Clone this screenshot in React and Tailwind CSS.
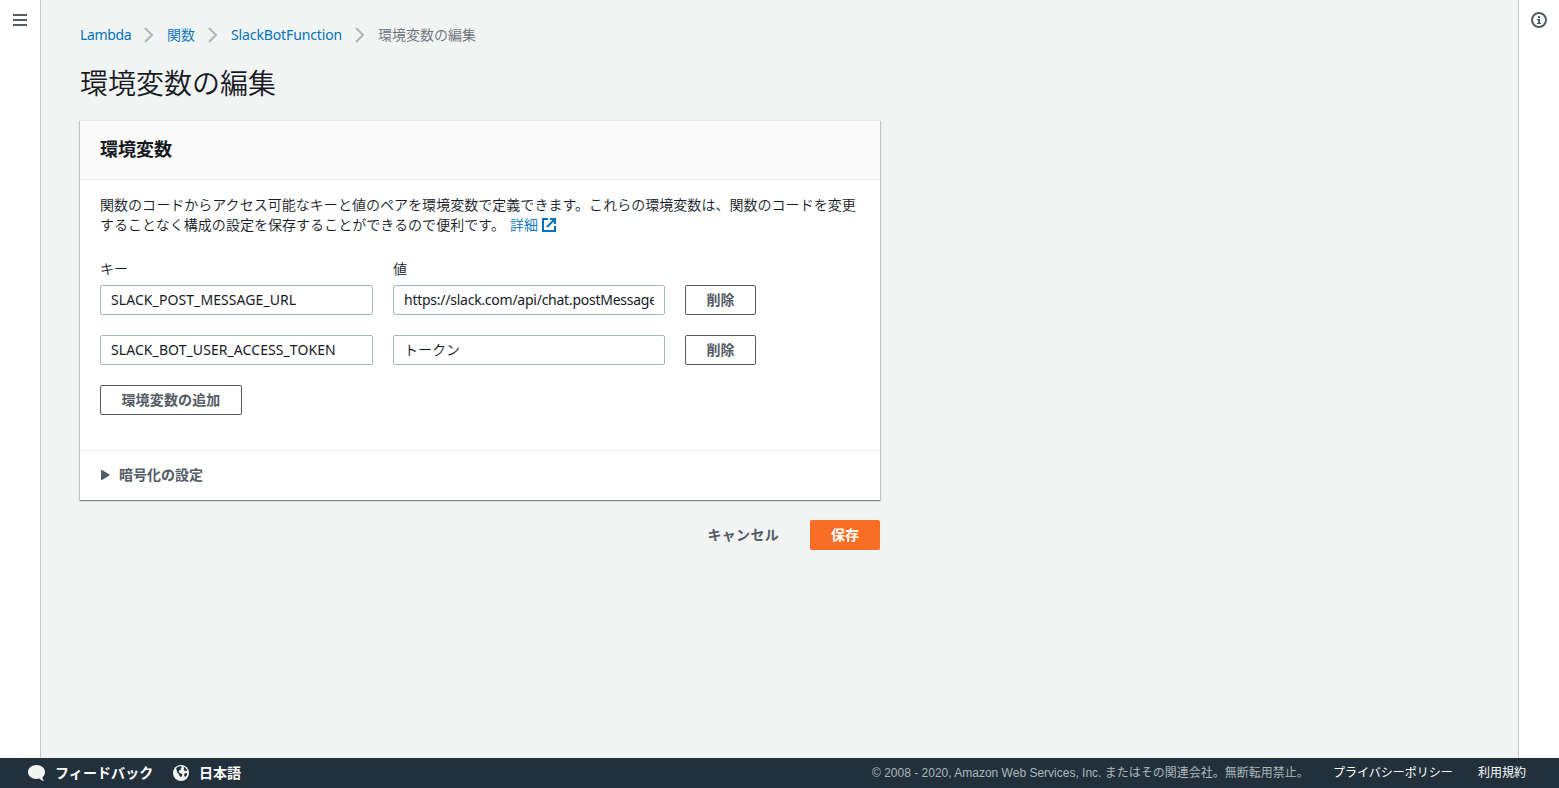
import React, { Fragment, useState } from "react";

const initialVariables = [
    { key: "SLACK_POST_MESSAGE_URL", value: "https://slack.com/api/chat.postMessage", keyStyle: "tracking-[0.08px]", valueStyle: "tracking-[-0.25px]" },
    { key: "SLACK_BOT_USER_ACCESS_TOKEN", value: "トークン", keyStyle: "tracking-[0.08px]", valueStyle: "font-[350]" },
];

function MenuIcon() {
    return (
        <svg width="14" height="12" viewBox="0 0 14 12" fill="#545b64">
            <path d="M0 0h14v2H0zM0 5h14v2H0zM0 10h14v2H0z" />
        </svg>
    );
}

function InfoIcon() {
    return (
        <svg width="16" height="16" viewBox="0 0 16 16" fill="none">
            <circle cx="8" cy="8" r="7" stroke="#545b64" strokeWidth="2" />
            <path d="M7 4h2v2H7zM6 7h3v4h1v1H6v-1h1V8H6z" fill="#545b64" />
        </svg>
    );
}

function ExternalIcon() {
    return (
        <svg className="ml-1 inline-block align-[-2px]" width="14" height="14" viewBox="0 0 14 14" fill="none" stroke="#0073bb" strokeWidth="2">
            <path d="M6 1H1v12h12V8M8 1h5v5M13 1L5 9" />
        </svg>
    );
}

function Chevron() {
    return (
        <svg width="10" height="16" viewBox="0 0 10 16" fill="none" stroke="#aab7b8" strokeWidth="2">
            <path d="M1 1l7 7-7 7" />
        </svg>
    );
}

function SpeechIcon() {
    return (
        <svg width="18" height="17" viewBox="0 0 18 17" fill="#f2f3f3">
            <path d="M8.500 0C3.800 0 0 3 0 6.900c0 3.900 3.800 7 8.500 7 1 0 2-.1 2.900-.4 1.200 1.500 2.800 2.400 4.600 2.500-1-1-1.500-2.400-1.500-3.900 1.600-1.300 2.500-3.100 2.500-5.200C17 3 13.200 0 8.500 0z" />
        </svg>
    );
}

function GlobeIcon() {
    return (
        <svg width="16" height="16" viewBox="0 0 16 16">
            <circle cx="8" cy="8" r="8" fill="#f2f3f3" />
            <path d="M3.200 3.200C4.600 1.700 6.200 1.200 8 1.300l1 1-1.400 1 .5 1.300-1.900 1-.6 1.500 1.300 1 1.500.3 1 1.400-.7 1.700-1.200.6-1.200-1.600-.3-1.500-1.600-1.200-.7-2.300zM10.500 1.800c1.800.7 3 1.900 3.700 3.600l-1.100.6-1.500-.3-1-1.300.6-1zM11.500 8.500l1.700-.6 1 .8c-.3 1.400-1 2.500-2.100 3.400l-1-1.300z" fill="#22303c" />
        </svg>
    );
}

function Breadcrumbs() {
    return (
        <nav className="flex h-5 items-center text-sm leading-5 text-[#0073bb]">
            <a className="w-[51px] tracking-[-0.35px] whitespace-nowrap">Lambda</a>
            <span className="ml-[13px] mr-[13px]"><Chevron /></span>
            <a className="w-7 font-[350] whitespace-nowrap">関数</a>
            <span className="ml-[13px] mr-[13px]"><Chevron /></span>
            <a className="w-[111px] tracking-[-0.12px] whitespace-nowrap">SlackBotFunction</a>
            <span className="ml-[13px] mr-[13px]"><Chevron /></span>
            <span className="font-[350] text-[#687078]">環境変数の編集</span>
        </nav>
    );
}

function EnvironmentCard() {
    const [variables, setVariables] = useState(initialVariables);
    const [encryptionOpen, setEncryptionOpen] = useState(false);

    const update = (index, field, value) => {
        setVariables(variables.map((item, i) => (i === index ? { ...item, [field]: value } : item)));
    };

    return (
        <section className="mt-[19px] w-[800px] bg-white shadow-[0_1px_1px_0_rgba(0,28,36,0.3),1px_1px_1px_0_rgba(0,28,36,0.15),-1px_1px_1px_0_rgba(0,28,36,0.15)]">
            <div className="flex h-[60px] items-center border-t border-b border-[#eaeded] bg-[#fafafa] px-5 pb-0.5">
                <h2 className="text-lg leading-[22px] font-bold">環境変数</h2>
            </div>
            <div className="h-[270px] px-5 pt-[15px] text-sm leading-5">
                <p className="font-[350] tracking-[0.035px] whitespace-nowrap">
                    関数のコードからアクセス可能なキーと値のペアを環境変数で定義できます。これらの環境変数は、関数のコードを変更<br />
                    することなく構成の設定を保存することができるので便利です。
                    <a className="ml-[5px] text-[#0073bb]">詳細<ExternalIcon /></a>
                </p>
                <div className="mt-6 grid grid-cols-[273px_272px_71px] gap-x-5 gap-y-5">
                    <label className="-mb-3.5 font-[350]">キー</label>
                    <label className="-mb-3.5 font-[350]">値</label>
                    <span className="-mb-3.5"></span>
                    {variables.map((item, index) => (
                        <Fragment key={index}>
                            <input type="text" className={`h-[30px] min-w-0 rounded-xs border border-[#aab7b8] px-2.5 pb-0.5 ${item.keyStyle}`} value={item.key} onChange={(e) => update(index, "key", e.target.value)} />
                            <input type="text" className={`h-[30px] min-w-0 rounded-xs border border-[#aab7b8] px-2.5 pb-0.5 ${item.valueStyle}`} value={item.value} onChange={(e) => update(index, "value", e.target.value)} />
                            <button className="h-[30px] rounded-xs border border-[#545b64] font-bold text-[#545b64]" onClick={() => setVariables(variables.filter((_, i) => i !== index))}>削除</button>
                        </Fragment>
                    ))}
                </div>
                <button className="mt-5 h-[30px] w-[142px] rounded-xs border border-[#545b64] font-bold tracking-[0.15px] text-[#545b64]" onClick={() => setVariables([...variables, { key: "", value: "", keyStyle: "", valueStyle: "" }])}>環境変数の追加</button>
            </div>
            <div className="flex h-[50px] items-center border-t border-[#eaeded] px-5 pb-0.5 text-sm font-bold text-[#545b64]" onClick={() => setEncryptionOpen(!encryptionOpen)}>
                <svg className={encryptionOpen ? "ml-px rotate-90" : "ml-px"} width="9" height="10" viewBox="0 0 9 10" fill="#545b64">
                    <path d="M0 0h1l7.500 4.500v1L1 10H0z" />
                </svg>
                <span className="ml-[9px]">暗号化の設定</span>
            </div>
        </section>
    );
}

function Footer() {
    return (
        <footer className="flex h-[30px] items-center bg-[#22303c] text-white">
            <span className="ml-7"><SpeechIcon /></span>
            <span className="ml-[9px] w-[100px] text-sm font-bold tracking-[0.1px] whitespace-nowrap">フィードバック</span>
            <span className="ml-[18px]"><GlobeIcon /></span>
            <span className="ml-2.5 text-sm font-bold">日本語</span>
            <div className="ml-auto flex font-['Liberation_Sans','Noto_Sans_CJK_JP',sans-serif] text-xs whitespace-nowrap">
                <span className="w-[461px] text-[#aab7b8]">© 2008 - 2020, Amazon Web Services, Inc. またはその関連会社。無断転用禁止。</span>
                <span className="w-[145px]">プライバシーポリシー</span>
                <span className="mr-[33px] w-12">利用規約</span>
            </div>
        </footer>
    );
}

export default function App() {
    return (
        <div className="flex h-[788px] w-[1559px] flex-col overflow-hidden bg-[#f2f3f3] font-['Noto_Sans','Noto_Sans_CJK_JP',sans-serif] text-[#16191f]">
            <div className="flex min-h-0 flex-1">
                <aside className="flex w-[41px] justify-center border-r border-[#c6cccc] bg-white pt-3.5">
                    <MenuIcon />
                </aside>
                <main className="flex-1 pt-[25px] pl-[39px]">
                    <Breadcrumbs />
                    <h1 className="mt-5 text-[28px] leading-9 font-[350]">環境変数の編集</h1>
                    <EnvironmentCard />
                    <div className="mt-5 flex w-[800px] justify-end text-sm font-bold">
                        <button className="mr-[31px] h-[30px] tracking-[0.3px] text-[#545b64]">キャンセル</button>
                        <button className="h-[30px] w-[70px] rounded-xs bg-[#f96d24] text-white">保存</button>
                    </div>
                </main>
                <aside className="flex w-[41px] justify-center border-l border-[#c6cccc] bg-white pt-3">
                    <InfoIcon />
                </aside>
            </div>
            <Footer />
        </div>
    );
}
